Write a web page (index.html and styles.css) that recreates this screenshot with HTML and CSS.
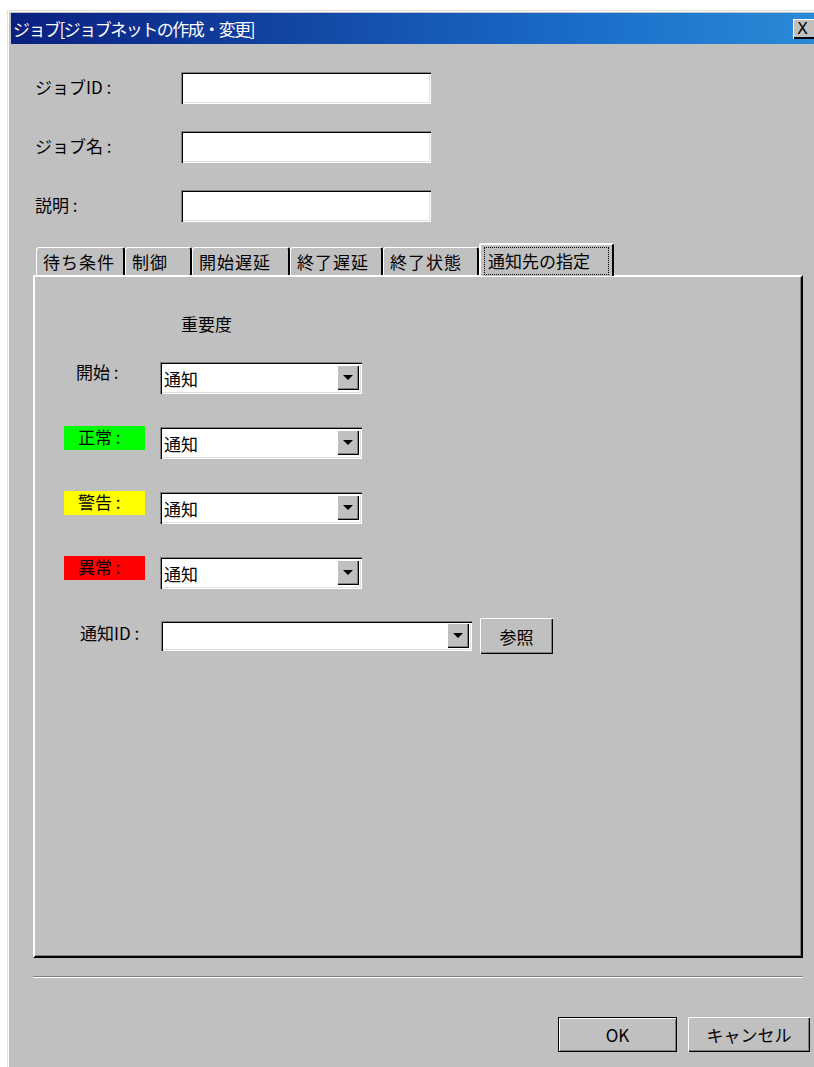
FILE: index.html
```html
<!DOCTYPE html>
<html>
<head>
    <title>ジョブ[ジョブネットの作成・変更]</title>
    <link rel="stylesheet" href="styles.css">
</head>
<body>
<div class="window">
    <div class="titlebar">
        <span class="title">ジョブ[ジョブネットの作成・変更]</span>
        <span class="close">X</span>
    </div>

    <div class="fields">
        <div class="row"><label>ジョブID :</label><input class="text"></div>
        <div class="row"><label>ジョブ名 :</label><input class="text"></div>
        <div class="row"><label>説明 :</label><input class="text"></div>
    </div>

    <div class="tabs">
        <span class="tab t1">待ち条件</span>
        <span class="tab t2">制御</span>
        <span class="tab t3">開始遅延</span>
        <span class="tab t4">終了遅延</span>
        <span class="tab t5">終了状態</span>
        <span class="tab active"><span class="focus">通知先の指定</span></span>
    </div>
    <div class="panel">
        <div class="heading">重要度</div>

        <div class="sev">
            <span class="lbl plain">開始 :</span>
            <div class="combo"><span class="val">通知</span><span class="arrow"></span></div>
        </div>
        <div class="sev">
            <span class="lbl green">正常 :</span>
            <div class="combo"><span class="val">通知</span><span class="arrow"></span></div>
        </div>
        <div class="sev">
            <span class="lbl yellow">警告 :</span>
            <div class="combo"><span class="val">通知</span><span class="arrow"></span></div>
        </div>
        <div class="sev">
            <span class="lbl red">異常 :</span>
            <div class="combo"><span class="val">通知</span><span class="arrow"></span></div>
        </div>

        <div class="notify">
            <span class="lbl plain">通知ID :</span>
            <div class="combo wide"><span class="val"></span><span class="arrow"></span></div>
            <button class="btn ref">参照</button>
        </div>
    </div>

    <div class="sep"></div>

    <div class="footer">
        <button class="btn ok">OK</button>
        <button class="btn cancel">キャンセル</button>
    </div>
</div>
</body>
</html>
```

FILE: styles.css
```css
body {
    margin: 0;
    padding: 10px 0 0 7px;
    background: #fff;
    font-family: "Noto Sans CJK JP", "DejaVu Sans", sans-serif;
    font-size: 17px;
    color: #000;
    overflow: hidden;
    height: 1067px;
    box-sizing: border-box;
}
.window {
    background: #c0c0c0;
    border-top: 1px solid #dfdfdf;
    border-left: 1px solid #dfdfdf;
    box-shadow: inset 1px 1px 0 #fff;
    padding: 2px 0 0 3px;
    height: 1100px;
    width: 830px;
    box-sizing: border-box;
}
.titlebar {
    height: 31px;
    background: linear-gradient(to right, #0a1f80, #1a6cc8 70%, #2a8ad8);
    display: flex;
    align-items: center;
    justify-content: space-between;
    color: #fff;
    width: 804px;
}
.title {
    padding-left: 2px;
    font-size: 17px;
    letter-spacing: -1.5px;
}
.close {
    width: 22px;
    height: 20px;
    background: #c0c0c0;
    color: #000;
    font-family: "DejaVu Sans", sans-serif;
    font-size: 16px;
    line-height: 20px;
    padding-left: 4px;
    box-shadow: inset 1px 1px 0 #fff, inset -1px -2px 0 #000;
    margin-right: -4px;
}

.fields {
    padding: 28px 0 0 24px;
    display: flex;
    flex-direction: column;
    gap: 27px;
}
.row {
    display: flex;
    align-items: flex-start;
}
.row label {
    width: 146px;
    padding-top: 2px;
}
.text {
    width: 250px;
    height: 32px;
    box-sizing: border-box;
    margin: 0;
    background: #fff;
    border: none;
    box-shadow: inset 1px 1px 0 #808080, inset 2px 2px 0 #000, inset -1px -1px 0 #fff, inset -2px -2px 0 #dfdfdf;
}

.tabs {
    display: flex;
    align-items: flex-end;
    margin: 21px 0 0 22px;
    height: 32px;
    position: relative;
    z-index: 1;
}
.tab {
    height: 28px;
    padding: 0 6px;
    line-height: 28px;
    box-sizing: border-box;
    border-top: 1px solid #fff;
    border-left: 1px solid #fff;
    border-right: 2px solid #000;
    border-radius: 3px 3px 0 0;
    white-space: nowrap;
    letter-spacing: 1px;
}
.t1 { width: 89px; margin-left: 3px; }
.t2 { width: 67px; }
.t3 { width: 98px; }
.t4 { width: 93px; }
.t5 { width: 96px; }
.tab.active {
    height: 33px;
    width: 135px;
    padding: 2px 3px 0;
    line-height: 26px;
    margin-bottom: -1px;
    background: #c0c0c0;
    border-top: 2px solid #fff;
    border-left: 2px solid #fff;
    letter-spacing: 0;
}
.focus {
    display: block;
    border: 1px dotted #000;
    padding: 0 3px;
    height: 26px;
    line-height: 25px;
}
.panel {
    width: 770px;
    height: 683px;
    margin-left: 22px;
    box-sizing: border-box;
    border-top: 2px solid #fff;
    border-left: 2px solid #fff;
    border-right: 2px solid #000;
    border-bottom: 2px solid #000;
    box-shadow: inset -1px -1px 0 #808080;
    padding: 34px 0 0 29px;
}
.heading {
    margin-left: 117px;
    height: 24px;
}
.sev {
    display: flex;
    align-items: flex-start;
    margin-top: 27px;
    height: 32px;
}
.sev + .sev {
    margin-top: 33px;
}
.lbl {
    width: 81px;
    height: 24px;
    line-height: 22px;
    margin-right: 15px;
    padding-left: 14px;
    box-sizing: border-box;
}
.plain { padding-left: 12px; margin-top: -1px; }
.green { background: #00ff00; margin-top: -1px; }
.yellow { background: #ffff00; margin-top: -1px; }
.red { background: #ff0000; margin-top: -1px; }
.combo {
    width: 202px;
    height: 32px;
    box-sizing: border-box;
    background: #fff;
    display: flex;
    align-items: center;
    justify-content: space-between;
    padding: 3px 3px 4px 4px;
    box-shadow: inset 1px 1px 0 #808080, inset 2px 2px 0 #000, inset -1px -1px 0 #fff, inset -2px -2px 0 #dfdfdf;
}
.combo .val {
    padding-top: 2px;
}
.arrow {
    width: 22px;
    height: 25px;
    background: #c0c0c0;
    box-shadow: inset 1px 1px 0 #fff, inset -1px -1px 0 #000, inset -2px -2px 0 #808080;
    position: relative;
}
.arrow::after {
    content: "";
    position: absolute;
    left: 6px;
    top: 10px;
    border-left: 5px solid transparent;
    border-right: 5px solid transparent;
    border-top: 5px solid #000;
}
.notify {
    display: flex;
    align-items: flex-start;
    margin-top: 32px;
}
.notify .lbl {
    margin-top: 1px;
    padding-left: 16px;
}
.combo.wide {
    width: 311px;
    height: 30px;
    margin-left: 1px;
}
.btn {
    font-family: inherit;
    font-size: 17px;
    background: #c0c0c0;
    border: none;
    margin: 0;
    padding: 0;
    box-shadow: inset 1px 1px 0 #fff, inset -1px -1px 0 #000, inset -2px -2px 0 #808080;
}
.ref {
    width: 73px;
    height: 36px;
    margin: -3px 0 0 8px;
}
.sep {
    width: 770px;
    margin: 18px 0 0 22px;
    border-top: 1px solid #808080;
    border-bottom: 1px solid #fff;
}
.footer {
    display: flex;
    margin: 39px 0 0 547px;
    gap: 11px;
}
.ok {
    width: 119px;
    height: 35px;
    box-shadow: inset 0 0 0 1px #000, inset 2px 2px 0 #fff, inset -2px -2px 0 #808080;
}
.cancel {
    width: 122px;
    height: 35px;
}
```
